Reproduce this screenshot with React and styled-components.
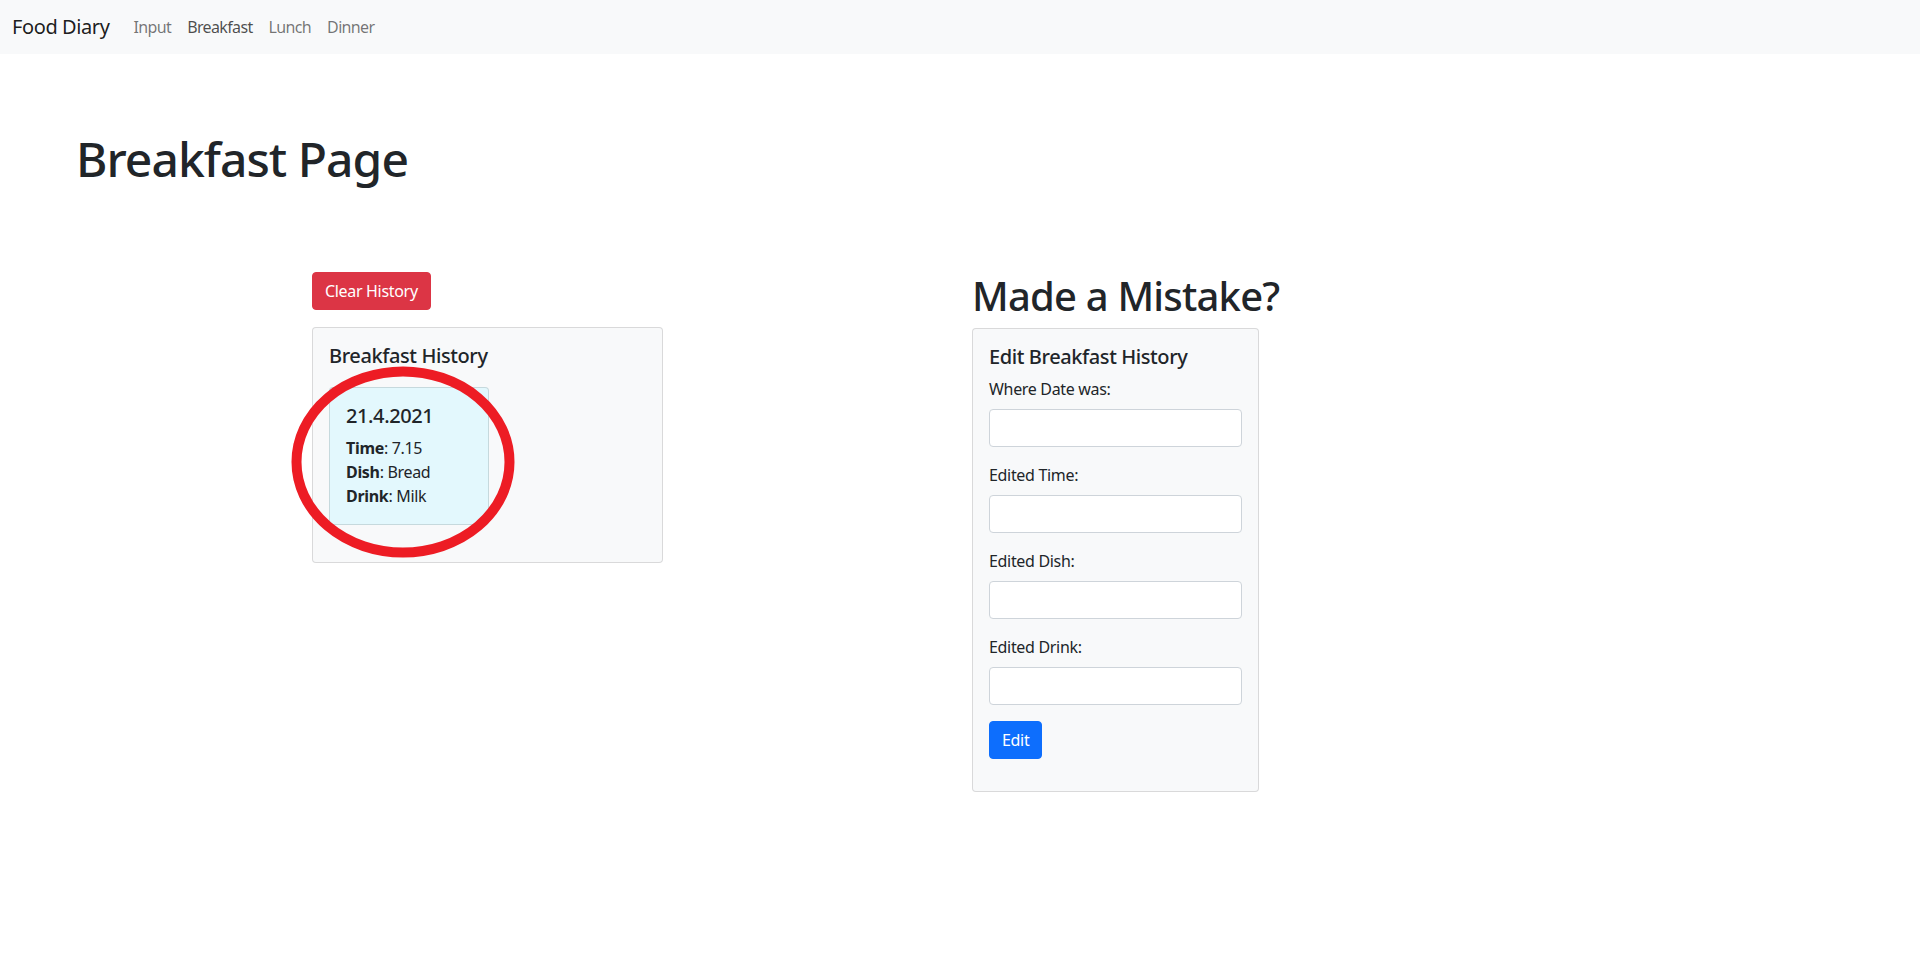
import React from 'react';
import styled, { createGlobalStyle } from 'styled-components';

const GlobalStyle = createGlobalStyle`
  * {
    box-sizing: border-box;
    letter-spacing: -0.02em;
  }

  body {
    margin: 0;
    font-family: "Noto Sans", "Open Sans", sans-serif;
    font-size: 16px;
    line-height: 1.5;
    color: #212529;
    background: #fff;
  }
`;

const Navbar = styled.nav`
  height: 54px;
  background: #f8f9fa;
  display: flex;
  align-items: center;
  padding: 0 12px;
`;

const Brand = styled.a`
  font-size: 20px;
  color: rgba(0, 0, 0, 0.9);
  text-decoration: none;
  margin-right: 16px;
`;

const NavLink = styled.a`
  padding: 0 8px;
  font-size: 16px;
  letter-spacing: -0.04em;
  color: ${(p) => (p.active ? 'rgba(0, 0, 0, 0.7)' : 'rgba(0, 0, 0, 0.55)')};
  text-decoration: none;
`;

const PageTitle = styled.h1`
  margin: 76px 0 0 76px;
  font-size: 48px;
  font-weight: 500;
  line-height: 1.2;
`;

const Container = styled.div`
  width: 1320px;
  margin: 84px auto 0;
  padding: 0 12px;
  display: grid;
  grid-template-columns: 1fr 1fr;
  column-gap: 24px;
  align-items: start;
`;

const Column = styled.div`
  display: flex;
  flex-direction: column;
  align-items: flex-start;
`;

const Button = styled.button`
  font-family: inherit;
  font-size: 16px;
  line-height: 1.5;
  padding: 6px 12px;
  border: 1px solid ${(p) => p.color};
  background: ${(p) => p.color};
  color: #fff;
  border-radius: 4px;
  cursor: pointer;
`;

const Card = styled.div`
  position: relative;
  width: ${(p) => p.width}px;
  margin-top: ${(p) => p.top || 0}px;
  background: #f8f9fa;
  border: 1px solid rgba(0, 0, 0, 0.125);
  border-radius: 4px;
  padding: 16px;
`;

const CardTitle = styled.h5`
  margin: 0 0 8px;
  font-size: 20px;
  font-weight: 500;
  line-height: 1.2;
`;

const EntryCard = styled.div`
  width: 160px;
  margin: 19px 0 21px;
  background: #e3f8fd;
  border: 1px solid rgba(0, 0, 0, 0.125);
  border-radius: 4px;
  padding: 16px;
`;

const EntryLine = styled.div`
  font-size: 16px;
  line-height: 24px;

  b {
    font-weight: 700;
  }
`;

const Circle = styled.svg`
  position: absolute;
  left: -22px;
  top: 38px;
  pointer-events: none;
`;

const SectionTitle = styled.h1`
  margin: 0 0 8px;
  font-size: 40px;
  font-weight: 500;
  line-height: 1.2;
`;

const Form = styled.form`
  display: flex;
  flex-direction: column;
  margin-bottom: 16px;
`;

const Label = styled.label`
  display: block;
  margin-bottom: 8px;
  font-size: 16px;
  line-height: 24px;
`;

const Input = styled.input`
  display: block;
  width: 100%;
  height: 38px;
  margin-bottom: 16px;
  padding: 6px 12px;
  font-family: inherit;
  font-size: 16px;
  background: #fff;
  border: 1px solid #ced4da;
  border-radius: 4px;
`;

const EditButton = styled(Button)`
  align-self: flex-start;
`;

const fields = ['Where Date was:', 'Edited Time:', 'Edited Dish:', 'Edited Drink:'];

const App = () => {
  return (
    <>
      <GlobalStyle />
      <Navbar>
        <Brand href="#">Food Diary</Brand>
        <NavLink href="#">Input</NavLink>
        <NavLink href="#" active>Breakfast</NavLink>
        <NavLink href="#">Lunch</NavLink>
        <NavLink href="#">Dinner</NavLink>
      </Navbar>

      <PageTitle>Breakfast Page</PageTitle>

      <Container>
        <Column>
          <Button color="#dc3545">Clear History</Button>
          <Card width={351} top={17}>
            <CardTitle>Breakfast History</CardTitle>
            <EntryCard>
              <CardTitle>21.4.2021</CardTitle>
              <EntryLine><b>Time</b>: 7.15</EntryLine>
              <EntryLine><b>Dish</b>: Bread</EntryLine>
              <EntryLine><b>Drink</b>: Milk</EntryLine>
            </EntryCard>
            <Circle width="224" height="192" viewBox="0 0 224 192">
              <ellipse cx="112" cy="96" rx="106.5" ry="90.5" fill="none" stroke="#ed1c24" strokeWidth="10" />
            </Circle>
          </Card>
        </Column>

        <Column>
          <SectionTitle>Made a Mistake?</SectionTitle>
          <Card width={287}>
            <CardTitle>Edit Breakfast History</CardTitle>
            <Form onSubmit={(e) => e.preventDefault()}>
              {fields.map((f) => (
                <div key={f}>
                  <Label>{f}</Label>
                  <Input type="text" />
                </div>
              ))}
              <EditButton color="#0d6efd">Edit</EditButton>
            </Form>
          </Card>
        </Column>
      </Container>
    </>
  );
};

export default App;
